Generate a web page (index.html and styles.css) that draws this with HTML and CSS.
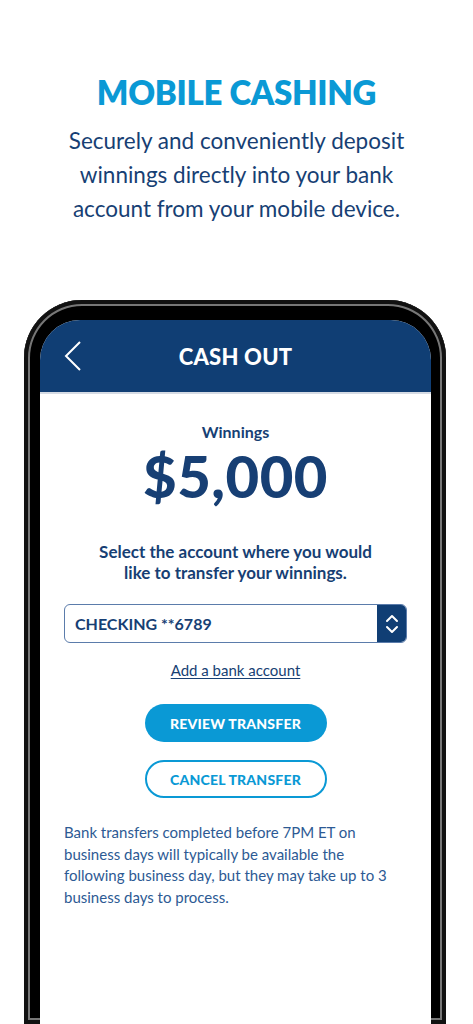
FILE: index.html
```html
<!DOCTYPE html>
<html lang="en">
<head>
  <meta charset="UTF-8" />
  <title>Mobile Cashing</title>
  <link rel="stylesheet" href="styles.css">
</head>
<body>
  <section class="intro">
    <h1>MOBILE CASHING</h1>
    <p>Securely and conveniently deposit winnings directly into your bank account from your mobile device.</p>
  </section>

  <div class="phone">
    <div class="screen">
      <header class="app-bar">
        <button class="back-btn" aria-label="Back">
          <svg width="18" height="30" viewBox="0 0 18 30">
            <path d="M16 1 L2 15 L16 29" fill="none" stroke="#fff" stroke-width="2" />
          </svg>
        </button>
        <h2>CASH OUT</h2>
        <span></span>
      </header>

      <main class="cashout">
        <div class="label">Winnings</div>
        <div class="amount">$5,000</div>

        <p class="prompt">Select the account where you would<br>like to transfer your winnings.</p>

        <div class="account-select">
          <span class="account-name">CHECKING **6789</span>
          <span class="select-arrows">
            <svg width="14" height="22" viewBox="0 0 14 22">
              <path d="M2 8 L7 3 L12 8 M2 14 L7 19 L12 14" fill="none" stroke="#fff" stroke-width="2" stroke-linecap="round" stroke-linejoin="round" />
            </svg>
          </span>
        </div>

        <a class="add-account" href="#">Add a bank account</a>

        <button class="btn btn-primary">REVIEW TRANSFER</button>
        <button class="btn btn-outline">CANCEL TRANSFER</button>

        <p class="note">Bank transfers completed before 7PM ET on business days will typically be available the following business day, but they may take up to 3 business days to process.</p>
      </main>
    </div>
  </div>
</body>
</html>
```

FILE: styles.css
```css
* {
  box-sizing: border-box;
}

html, body {
  height: 100%;
  overflow: hidden;
}

body {
  margin: 0;
  font-family: 'Lato', 'Open Sans', sans-serif;
  background: #fff;
  color: #173f74;
}

.intro {
  height: 300px;
  padding-top: 70px;
  text-align: center;
}

.intro h1 {
  margin: 0;
  font-size: 33px;
  font-weight: 800;
  line-height: 44px;
  color: #0a99d5;
  letter-spacing: -0.3px;
}

.intro p {
  margin: 10px auto 0;
  width: 350px;
  font-size: 22.5px;
  line-height: 34px;
  color: #173f74;
}

/* black phone bezel, open at the bottom */
.phone {
  margin-left: 24px;
  width: 422px;
  height: 724px;
  padding: 20px 15px 0 16px;
  background: #000;
  border-radius: 58px 58px 0 0;
  box-shadow: inset 0 0 0 4px #111, inset 0 0 0 6px #777, inset 0 0 0 8px #000;
}

.screen {
  height: 100%;
  background: #fff;
  border-radius: 40px 40px 0 0;
  overflow: hidden;
}

.app-bar {
  height: 74px;
  display: grid;
  grid-template-columns: 1fr auto 1fr;
  align-items: center;
  background: #103e74;
  border-bottom: 2px solid #d5dbe4;
  padding: 0 24px;
}

.back-btn {
  justify-self: start;
  background: none;
  border: none;
  padding: 0;
  display: flex;
}

.app-bar h2 {
  margin: 0;
  color: #fff;
  font-size: 22px;
  font-weight: 900;
  letter-spacing: 0.2px;
}

.cashout {
  padding: 28px 24px 0;
  display: flex;
  flex-direction: column;
  align-items: center;
}

.label {
  font-size: 16px;
  font-weight: 700;
  line-height: 20px;
}

.amount {
  margin-top: 3px;
  font-size: 58px;
  font-weight: 900;
  line-height: 62px;
  letter-spacing: 0.5px;
}

.prompt {
  margin: 34px 0 0;
  text-align: center;
  font-size: 17px;
  font-weight: 700;
  line-height: 21px;
}

.account-select {
  margin-top: 21px;
  width: 100%;
  height: 39px;
  display: flex;
  border: 1px solid #5b7cab;
  border-radius: 6px;
  overflow: hidden;
}

.account-name {
  flex: 1;
  padding-left: 10px;
  display: flex;
  align-items: center;
  font-size: 16px;
  font-weight: 700;
}

.select-arrows {
  width: 29px;
  background: #103e74;
  display: flex;
  align-items: center;
  justify-content: center;
}

.add-account {
  margin-top: 18px;
  font-size: 15px;
  color: #173f74;
  text-decoration: underline;
  text-underline-offset: 2px;
}

.btn {
  width: 182px;
  height: 38px;
  border-radius: 19px;
  font-family: inherit;
  font-size: 14px;
  font-weight: 900;
  letter-spacing: 0.2px;
  cursor: pointer;
}

.btn-primary {
  margin-top: 25px;
  background: #0a99d5;
  border: none;
  color: #fff;
}

.btn-outline {
  margin-top: 18px;
  background: #fff;
  border: 2px solid #0a99d5;
  color: #0a99d5;
}

.note {
  margin: 24px 0 0;
  align-self: flex-start;
  max-width: 326px;
  font-size: 15px;
  line-height: 21.7px;
  color: #2d5a94;
}
```
